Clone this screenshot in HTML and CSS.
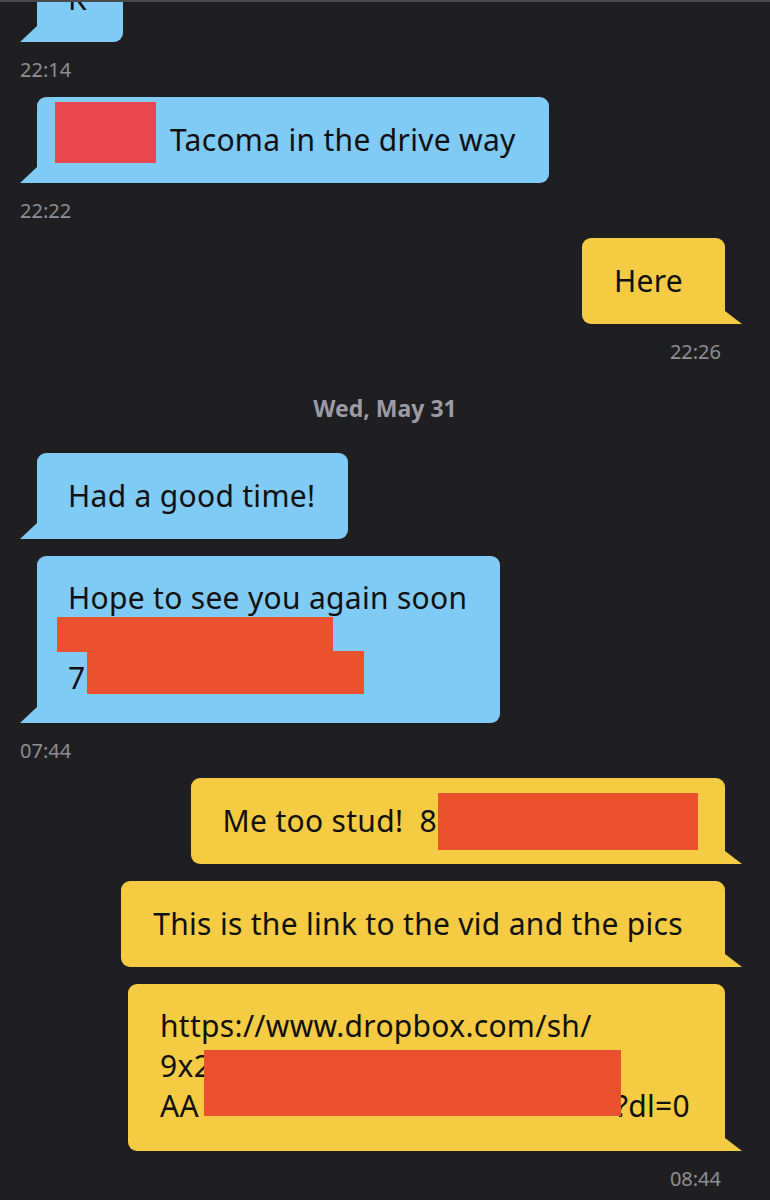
FILE: index.html
```html
<!DOCTYPE html>
<html lang="en">
<head>
<meta charset="utf-8">
<title>Chat</title>
<link rel="stylesheet" href="styles.css">
</head>
<body>
<div class="screen">
  <div class="bubble in first">K</div>
  <div class="time in">22:14</div>

  <div class="bubble in"><span class="redact pink r-taco"></span>Tacoma in the drive way</div>
  <div class="time in">22:22</div>

  <div class="bubble out">Here</div>
  <div class="time out">22:26</div>

  <div class="date">Wed, May 31</div>

  <div class="bubble in">Had a good time!</div>
  <div class="bubble in multi">Hope to see you again soon<br><span class="redact r-hope1"></span><br>7<span class="redact r-hope2"></span></div>
  <div class="time in">07:44</div>

  <div class="bubble out tight">Me too stud!&nbsp; 8<span class="redact r-me"></span></div>
  <div class="bubble out">This is the link to the vid and the pics</div>
  <div class="bubble out link multi">https://www.dropbox.com/sh/<br>9x2<span class="redact r-link"></span><br>AA<span class="gap"></span>?dl=0</div>
  <div class="time out">08:44</div>

  <div class="next"></div>
</div>
</body>
</html>
```

FILE: styles.css
```css
html, body {
  margin: 0;
  padding: 0;
  background: #1f1f21;
}

.screen {
  border-top: 2px solid #48484d;
  height: 1198px;
  overflow: hidden;
  display: flex;
  flex-direction: column;
  font-family: "Noto Sans", "DejaVu Sans", sans-serif;
}

.bubble {
  position: relative;
  font-size: 30px;
  line-height: 40px;
  letter-spacing: 0.3px;
  padding: 23px 33px 23px 31px;
  color: #101010;
  white-space: nowrap;
  flex-shrink: 0;
}

.bubble.multi {
  padding-top: 22px;
  padding-bottom: 25px;
}

.bubble.in {
  align-self: flex-start;
  margin-left: 37px;
  background: #80caf6;
  border-radius: 9px 9px 9px 0;
}

.bubble.in::before {
  content: "";
  position: absolute;
  left: -17px;
  bottom: 0;
  width: 17px;
  height: 16px;
  background: #80caf6;
  clip-path: polygon(100% 0, 0 100%, 100% 100%);
}

.bubble.out {
  align-self: flex-end;
  margin-right: 45px;
  background: #f5cb43;
  border-radius: 9px 9px 0 9px;
  padding-left: 32px;
  padding-right: 42px;
}

.bubble.out::after {
  content: "";
  position: absolute;
  right: -17px;
  bottom: 0;
  width: 17px;
  height: 13px;
  background: #f5cb43;
  clip-path: polygon(0 0, 100% 100%, 0 100%);
}

.bubble + .bubble {
  margin-top: 17px;
}

.bubble.first {
  margin-top: -46px;
  padding-right: 36px;
}

.bubble.out.tight {
  padding-right: 27px;
}

.bubble.out.link {
  padding-right: 35px;
}

.time {
  font-size: 20px;
  line-height: 24px;
  color: #8e8e94;
  margin: 16px 0 15px;
  flex-shrink: 0;
}

.time.in {
  align-self: flex-start;
  margin-left: 20px;
}

.time.out {
  align-self: flex-end;
  margin-right: 49px;
}

.date {
  text-align: center;
  font-size: 23px;
  line-height: 28px;
  font-weight: 700;
  color: #9b9ba6;
  margin: 15px 0 31px;
  flex-shrink: 0;
}

.redact {
  display: inline-block;
  vertical-align: top;
  background: #e9512f;
  position: relative;
  z-index: 1;
}

.redact.pink {
  background: #e8474f;
}

.r-taco {
  width: 101px;
  height: 61px;
  margin: -18px 14px -5px -13px;
}

.r-hope1 {
  width: 276px;
  height: 35px;
  margin: -1px 0 0 -11px;
}

.r-hope2 {
  width: 277px;
  height: 43px;
  margin: -7px 0 0 2px;
}

.r-me {
  width: 260px;
  height: 57px;
  margin: -8px 0 -9px 1px;
}

.r-link {
  width: 417px;
  height: 66px;
  margin: 4px 0 -30px -7px;
}

.gap {
  display: inline-block;
  width: 416px;
}

.next {
  margin: 5px 45px 0 40px;
  height: 12px;
  border-radius: 10px 10px 0 0;
  background: linear-gradient(90deg, #2c2c2d 0%, #2f2e2a 40%, #52461d 60%, #5e4d1c 100%);
  flex-shrink: 0;
}
```
